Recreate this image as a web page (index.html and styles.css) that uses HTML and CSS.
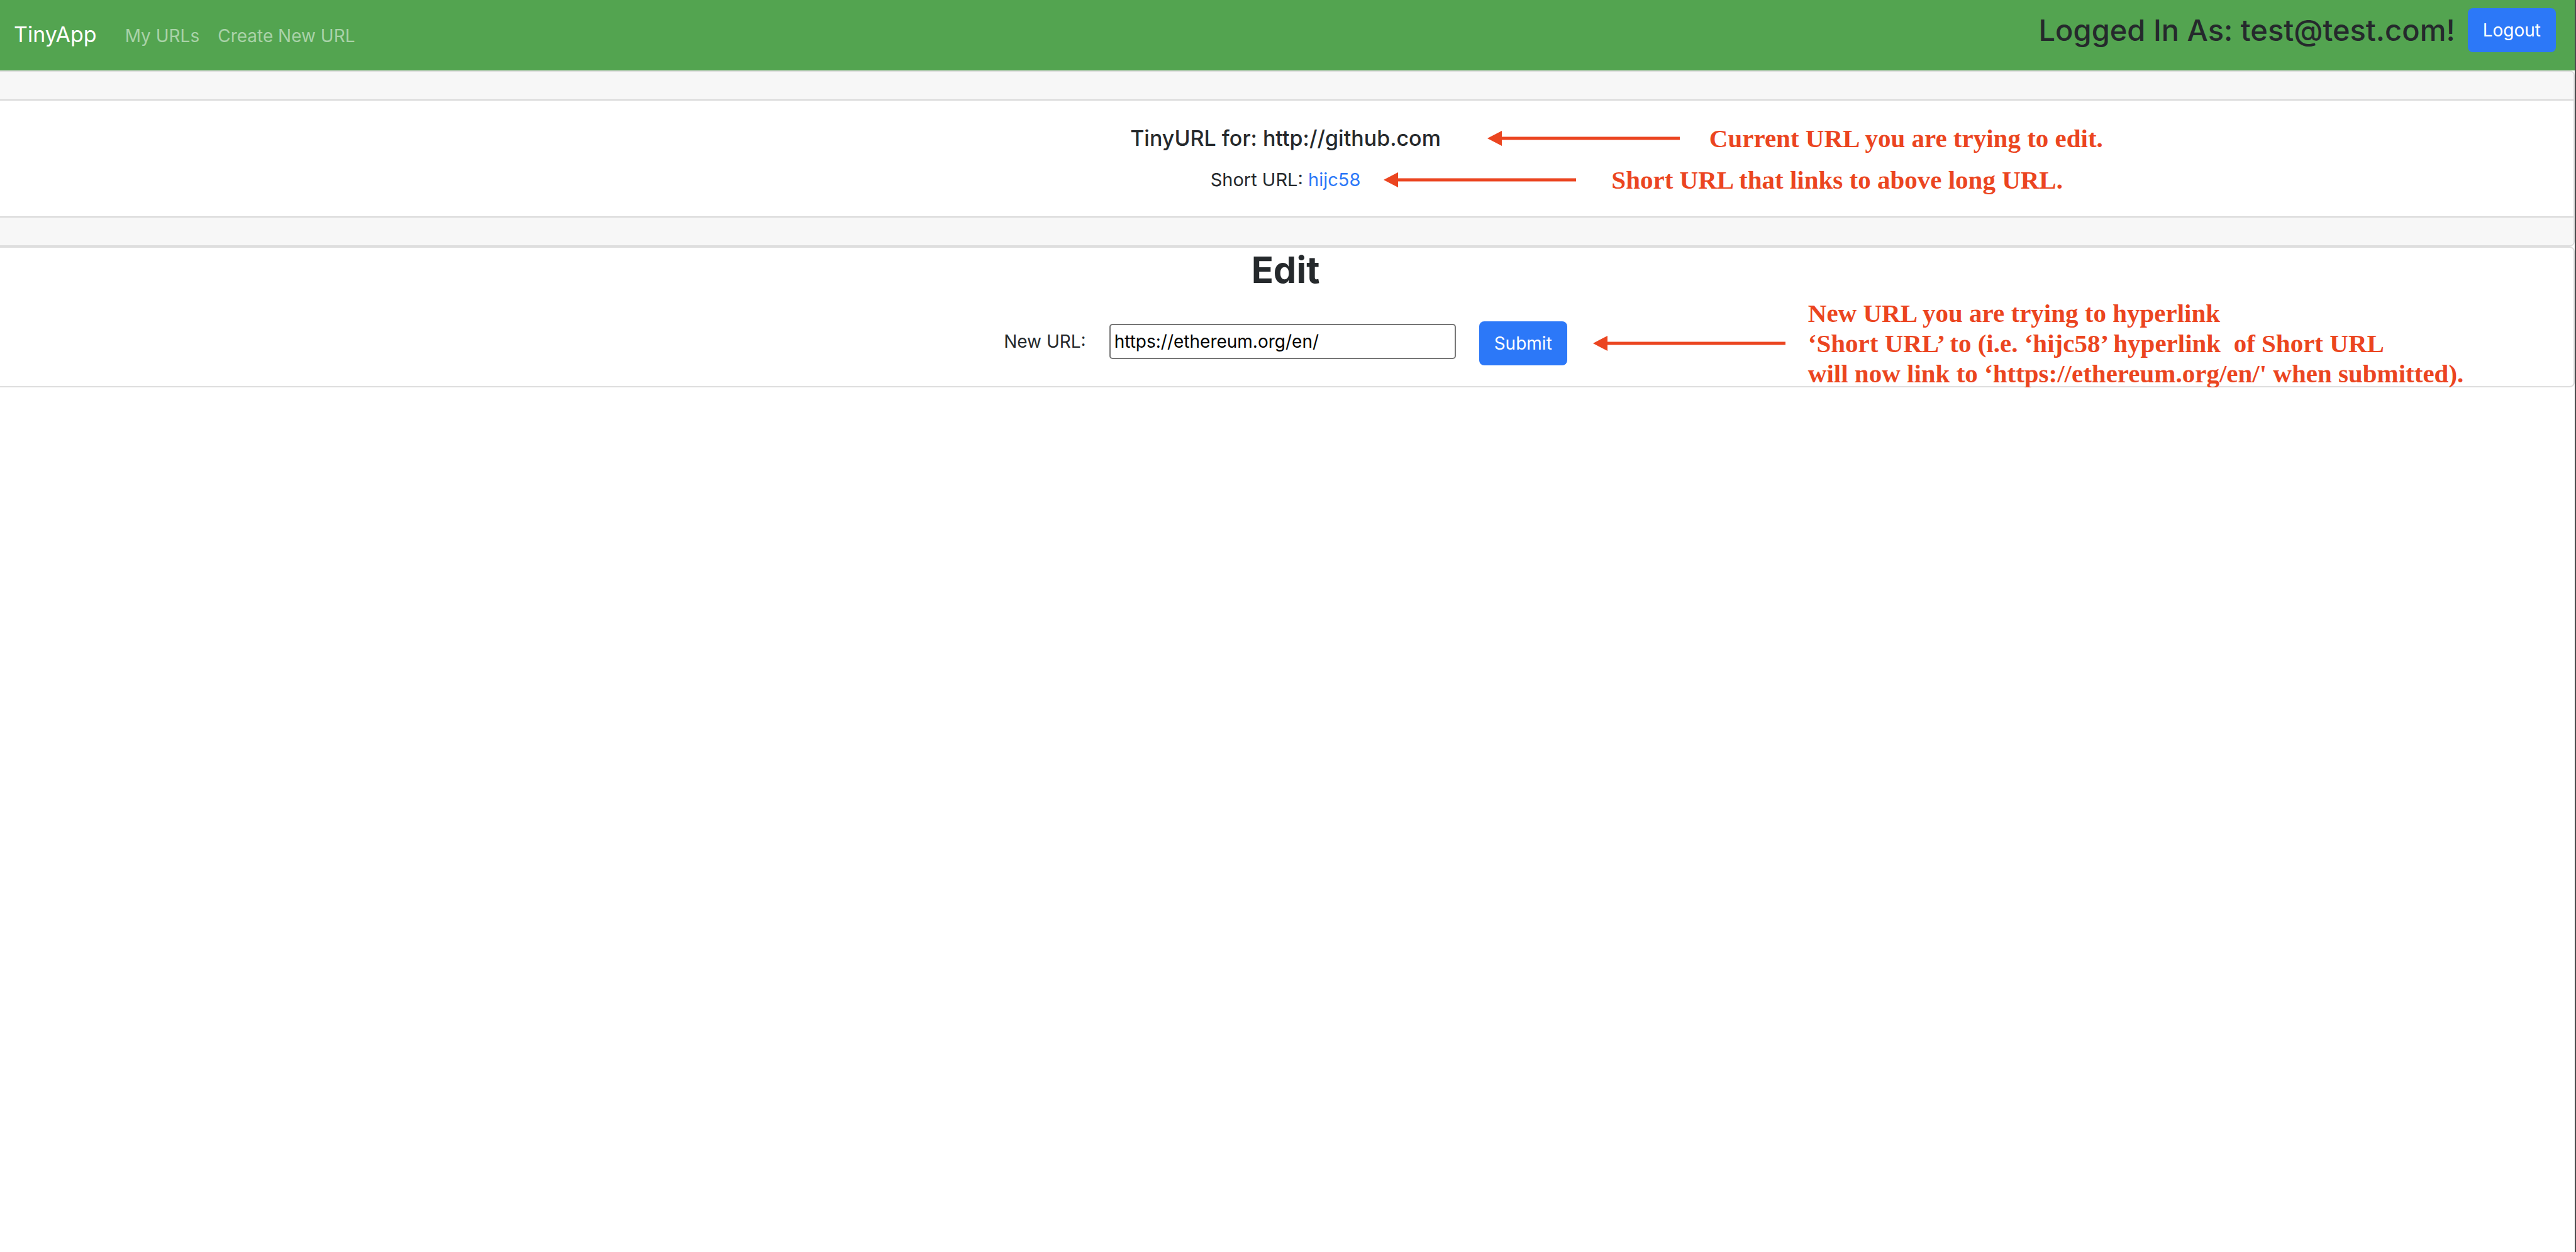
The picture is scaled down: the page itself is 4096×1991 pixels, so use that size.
FILE: index.html
```html
<!DOCTYPE html>
<html lang="en">
<head>
  <meta charset="utf-8">
  <title>TinyApp</title>
  <link rel="stylesheet" href="styles.css">
</head>
<body>
  <header class="navbar">
    <nav class="nav-links">
      <a class="brand" href="#">TinyApp</a>
      <a class="nav-link" href="#">My URLs</a>
      <a class="nav-link" href="#">Create New URL</a>
    </nav>
    <form class="session">
      <span class="session-user">Logged In As: test@test.com!</span>
      <button class="btn" type="button">Logout</button>
    </form>
  </header>

  <main>
    <section class="card">
      <div class="card-band"></div>
      <div class="card-body">
        <h5 class="card-title">
          <span class="anchor">TinyURL for: http://github.com
            <span class="note note-title">
              <svg class="arrow" viewBox="0 0 306 24" aria-hidden="true"><path d="M0 12 23 0V9.500H306v5H23V24z"/></svg>
              <span>Current URL you are trying to edit.</span>
            </span>
          </span>
        </h5>
        <p class="card-text">
          <span class="anchor">Short URL: <a class="link" href="#">hijc58</a>
            <span class="note note-short">
              <svg class="arrow" viewBox="0 0 306 24" aria-hidden="true"><path d="M0 12 23 0V9.500H306v5H23V24z"/></svg>
              <span>Short URL that links to above long URL.</span>
            </span>
          </span>
        </p>
      </div>
      <div class="card-band"></div>
    </section>

    <section class="card card-edit">
      <h3 class="edit-title">Edit</h3>
      <form class="edit-form">
        <div class="field">
          <label for="new-url">New URL:</label>
          <input class="url-input" id="new-url" type="text" value="https://ethereum.org/en/">
        </div>
        <span class="anchor">
          <button class="btn" type="button">Submit</button>
          <span class="note note-form">
            <svg class="arrow" viewBox="0 0 306 24" aria-hidden="true"><path d="M0 12 23 0V9.500H306v5H23V24z"/></svg>
            <span>New URL you are trying to hyperlink
‘Short URL’ to (i.e. ‘hijc58’ hyperlink  of Short URL
will now link to ‘https://ethereum.org/en/' when submitted).</span>
          </span>
        </span>
      </form>
    </section>
  </main>
</body>
</html>
```
FILE: styles.css
```css
* {
  box-sizing: border-box;
}

html {
  min-height: 100%;
  border-right: 2px solid #4a4a4c;
  background: #fff;
}

body {
  margin: 0;
  color: #25292c;
  font: 28px/46px Inter, "Liberation Sans", sans-serif;
}

a {
  text-decoration: none;
}

.navbar {
  display: flex;
  justify-content: space-between;
  align-items: flex-start;
  height: 112px;
  padding: 13px 30px 0 22px;
  background: #53a450;
}

.nav-links {
  display: flex;
  align-items: baseline;
  padding-top: 19px;
}

.brand {
  margin-right: 45px;
  color: #fff;
  font-size: 34px;
}

.nav-link {
  margin-right: 29px;
  color: #a9d2a8;
}

.session {
  display: flex;
  gap: 20px;
}

.session-user {
  font-size: 47px;
  font-weight: 500;
  line-height: 70px;
}

.btn {
  display: block;
  height: 70px;
  padding: 0 24px;
  border: 0;
  border-radius: 8px;
  background: #2c78f8;
  color: #fff;
  font: inherit;
}

.card {
  border: solid #dedede;
  border-width: 2px 2px 2px 0;
  border-radius: 0 8px 8px 0;
}

.card-band {
  height: 44px;
  border-radius: 0 6px 0 0;
  background: #f7f7f7;
}

.card-band:last-child {
  border-radius: 0 0 6px 0;
}

.card-body {
  padding: 37px 4px 29px 0;
  border: solid #d8d8d8;
  border-width: 2px 0;
  text-align: center;
}

.card-title {
  margin: 0 0 14px;
  font-size: 34px;
  font-weight: 500;
}

.card-text {
  margin: 0;
  font-size: 29px;
  line-height: 58px;
}

.link {
  color: #2c78f8;
}

.card-edit {
  padding: 0 4px 33px 0;
  text-align: center;
}

.edit-title {
  margin: 0 0 47px;
  font-size: 58px;
  font-weight: 700;
  line-height: 70px;
}

.edit-form {
  display: flex;
  justify-content: center;
  align-items: flex-start;
  gap: 37px;
}

.field {
  display: flex;
  align-items: center;
  gap: 37px;
  height: 64px;
}

.url-input {
  width: 551px;
  height: 56px;
  padding: 0 6px;
  border: 2px solid #767676;
  border-radius: 5px;
  color: #000;
  font: inherit;
}

.anchor {
  position: relative;
  display: inline-block;
}

/* Notes hang to the right of the element they describe. */
.note {
  position: absolute;
  top: 50%;
  left: 100%;
  display: flex;
  align-items: center;
  transform: translateY(-50%);
  color: #eb4520;
  font: 700 41px/48px "Liberation Serif", serif;
  text-align: left;
  white-space: pre;
}

.arrow {
  width: 306px;
  height: 24px;
  fill: currentColor;
}

.note-title {
  gap: 47px;
  padding-left: 74px;
}

.note-short {
  gap: 56px;
  padding-left: 37px;
}

.note-form {
  gap: 36px;
  padding-left: 41px;
}
```
